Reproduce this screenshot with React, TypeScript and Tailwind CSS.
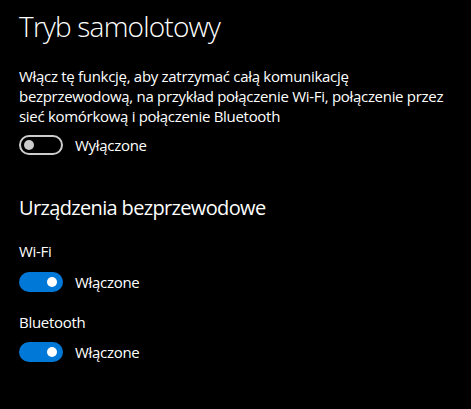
import React from "react";

function Toggle({ on, label }: { on: boolean; label: string }) {
  return (
    <div className="flex items-center">
      {on ? (
        <div className="w-[44px] h-[20px] rounded-full bg-[#0078d7] flex items-center justify-end pr-[6px]">
          <div className="w-[10px] h-[10px] rounded-full bg-white" />
        </div>
      ) : (
        <div className="w-[44px] h-[20px] rounded-full border-2 border-[#cccccc] flex items-center pl-[3px]">
          <div className="w-[10px] h-[10px] rounded-full bg-[#cccccc]" />
        </div>
      )}
      <span className="ml-[12px] text-[15px] leading-[20px] tracking-[-0.3px]">{label}</span>
    </div>
  );
}

export default function App() {
  return (
    <div
      className="w-[471px] h-[409px] bg-black text-white pl-[19px] pt-[8px]"
      style={{ fontFamily: '"Open Sans", "Noto Sans", sans-serif' }}
    >
      <h1 className="text-[28px] leading-[36px] font-light tracking-[-0.8px]">Tryb samolotowy</h1>
      <p className="mt-[22px] text-[15px] leading-[20px] tracking-[-0.3px] whitespace-nowrap">
        Włącz tę funkcję, aby zatrzymać całą komunikację
        <br />
        bezprzewodową, na przykład połączenie Wi-Fi, połączenie przez
        <br />
        sieć komórkową i połączenie Bluetooth
      </p>
      <div className="mt-[9px]">
        <Toggle on={false} label="Wyłączone" />
      </div>
      <h2 className="mt-[39px] text-[20px] leading-[28px] tracking-[-0.65px]">Urządzenia bezprzewodowe</h2>
      <div className="mt-[19px] text-[15px] leading-[20px] tracking-[-0.3px]">Wi-Fi</div>
      <div className="mt-[11px]">
        <Toggle on label="Włączone" />
      </div>
      <div className="mt-[20px] text-[15px] leading-[20px] tracking-[-0.3px]">Bluetooth</div>
      <div className="mt-[10px]">
        <Toggle on label="Włączone" />
      </div>
    </div>
  );
}
